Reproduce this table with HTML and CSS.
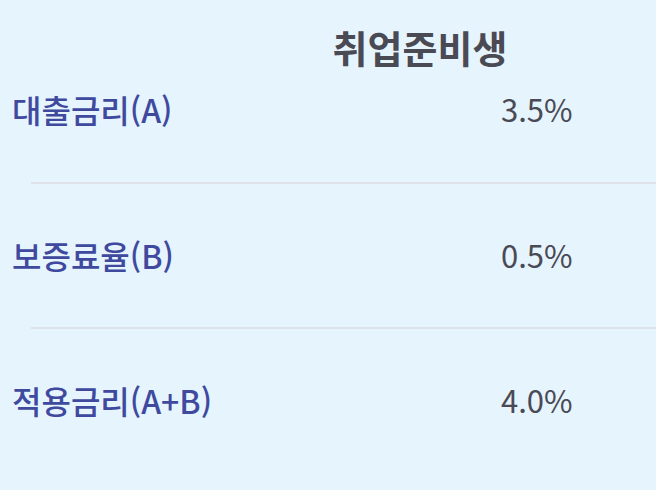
FILE: index.html
```html
<!DOCTYPE html>
<html lang="ko">
<head>
<meta charset="utf-8">
<link rel="stylesheet" href="styles.css">
</head>
<body>
<div class="table">
  <div class="head">취업준비생</div>
  <div class="row first">
    <div class="label">대출금리(A)</div>
    <div class="value">3.5%</div>
  </div>
  <div class="divider"></div>
  <div class="row">
    <div class="label">보증료율(B)</div>
    <div class="value">0.5%</div>
  </div>
  <div class="divider"></div>
  <div class="row">
    <div class="label">적용금리(A+B)</div>
    <div class="value">4.0%</div>
  </div>
</div>
</body>
</html>
```
FILE: styles.css
```css
html, body {
  margin: 0;
  padding: 0;
  background: #e6f4fe;
}
body {
  width: 656px;
  height: 490px;
  overflow: hidden;
  font-family: "Noto Sans CJK KR", "Noto Sans", sans-serif;
}
.table {
  display: flex;
  flex-direction: column;
}
.head {
  padding: 26px 0 0 184px;
  height: 42px;
  line-height: 42px;
  text-align: center;
  font-size: 38px;
  font-weight: 700;
  color: #4a4a55;
}
.row {
  display: flex;
  align-items: center;
  height: 40px;
  padding: 51px 0 52px 12px;
}
.row.first {
  padding-top: 21px;
  padding-bottom: 53px;
}
.label {
  flex: 1;
  font-size: 32px;
  font-weight: 500;
  color: #3f4a9e;
  line-height: 40px;
}
.value {
  width: 155px;
  font-size: 31px;
  color: #4a4a55;
  line-height: 40px;
}
.divider {
  height: 2px;
  margin-left: 31px;
  background: #dfe3e9;
}
```
